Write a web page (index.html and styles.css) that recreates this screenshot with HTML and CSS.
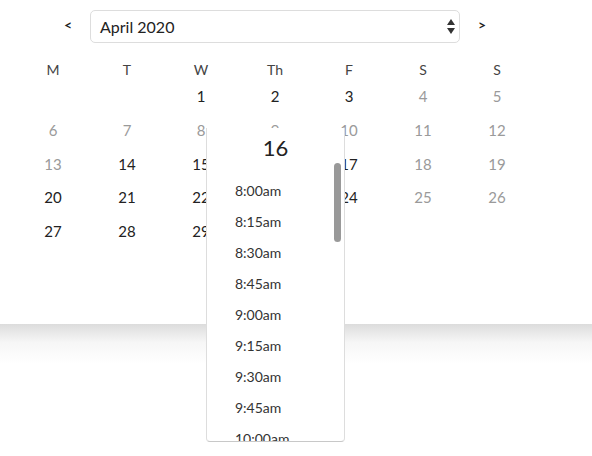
FILE: index.html
```html
<!DOCTYPE html>
<html lang="en">
<head>
    <meta charset="UTF-8">
    <meta name="viewport" content="width=device-width, initial-scale=1.0">
    <title>Booking Calendar</title>
    <link rel="stylesheet" href="styles.css">
</head>
<body>
  <div class="page">
    <div class="calendar">
        <!-- Month navigation -->
        <div class="nav">
            <button class="nav-btn">&lt;</button>
            <div class="month-select">
                <span>April 2020</span>
                <svg width="8" height="15" viewBox="0 0 8 15">
                    <path d="M4 0 L8 6 L0 6 Z" fill="#333"/>
                    <path d="M0 9 L8 9 L4 15 Z" fill="#333"/>
                </svg>
            </div>
            <button class="nav-btn">&gt;</button>
        </div>

        <!-- Days grid -->
        <div class="days">
            <div class="weekday">M</div>
            <div class="weekday">T</div>
            <div class="weekday">W</div>
            <div class="weekday">Th</div>
            <div class="weekday">F</div>
            <div class="weekday">S</div>
            <div class="weekday">S</div>

            <div class="day"></div>
            <div class="day"></div>
            <div class="day">1</div>
            <div class="day">2</div>
            <div class="day">3</div>
            <div class="day off">4</div>
            <div class="day off">5</div>

            <div class="day off">6</div>
            <div class="day off">7</div>
            <div class="day off">8</div>
            <div class="day off">9</div>
            <div class="day off">10</div>
            <div class="day off">11</div>
            <div class="day off">12</div>

            <div class="day off">13</div>
            <div class="day">14</div>
            <div class="day">15</div>
            <div class="day">16</div>
            <div class="day">17</div>
            <div class="day off">18</div>
            <div class="day off">19</div>

            <div class="day">20</div>
            <div class="day">21</div>
            <div class="day">22</div>
            <div class="day">23</div>
            <div class="day">24</div>
            <div class="day off">25</div>
            <div class="day off">26</div>

            <div class="day">27</div>
            <div class="day">28</div>
            <div class="day">29</div>
            <div class="day">30</div>
            <div class="day"></div>
            <div class="day"></div>
            <div class="day"></div>
        </div>
    </div>

    <!-- Time picker for selected day -->
    <div class="time-popup">
        <div class="time-title">16</div>
        <ul class="time-list">
            <li>8:00am</li>
            <li>8:15am</li>
            <li>8:30am</li>
            <li>8:45am</li>
            <li>9:00am</li>
            <li>9:15am</li>
            <li>9:30am</li>
            <li>9:45am</li>
            <li>10:00am</li>
            <li>10:15am</li>
            <li>10:30am</li>
            <li>10:45am</li>
        </ul>
        <div class="scroll-thumb"></div>
    </div>
  </div>
  <div class="page-shadow"></div>
</body>
</html>
```

FILE: styles.css
```css
html, body {
    min-height: 456px;
}
body {
    margin: 0;
    font-family: Lato, "Open Sans", sans-serif;
    color: #222;
    background: #fff;
}
.page {
    position: relative;
    z-index: 1;
    height: 324px;
    padding-top: 10px;
    box-sizing: border-box;
}
.page-shadow {
    height: 40px;
    background: linear-gradient(#dcdcdc, #f6f6f6 45%, #fff);
}
.calendar {
    width: 518px;
    margin-left: 16px;
}
.nav {
    display: flex;
    justify-content: center;
    align-items: center;
    gap: 10px;
    height: 33px;
}
.nav-btn {
    width: 24px;
    padding: 0 0 5px;
    border: none;
    background: none;
    font-family: inherit;
    font-size: 14px;
    font-weight: 700;
    color: #222;
}
.month-select {
    width: 370px;
    height: 33px;
    box-sizing: border-box;
    border: 1px solid #ddd;
    border-radius: 5px;
    padding: 0 4px 0 9px;
    display: flex;
    justify-content: space-between;
    align-items: center;
    font-size: 16px;
}
.days {
    display: grid;
    grid-template-columns: repeat(7, 74px);
    grid-template-rows: 21px;
    grid-auto-rows: 33.8px;
    margin-top: 16px;
}
.weekday {
    text-align: center;
    font-size: 14px;
    color: #444;
    line-height: 21px;
}
.day {
    text-align: center;
    font-size: 15px;
    line-height: 33.8px;
    color: #222;
}
.day.off {
    color: #9a9a9a;
}
.time-popup {
    position: absolute;
    left: 206px;
    top: 128px;
    width: 139px;
    height: 314px;
    box-sizing: border-box;
    background: #fff;
    border: 1px solid #ddd;
    border-top: none;
    border-bottom-color: #c8c8c8;
    border-radius: 0 0 4px 4px;
    display: flex;
    flex-direction: column;
}
.time-title {
    height: 35px;
    padding-top: 5px;
    box-sizing: border-box;
    line-height: 29px;
    text-align: center;
    font-size: 22px;
}
.time-list {
    list-style: none;
    margin: 0;
    padding: 12px 0 0 28px;
    flex: 1;
    overflow: hidden;
}
.time-list li {
    font-size: 14px;
    line-height: 31px;
    color: #333;
}
.scroll-thumb {
    position: absolute;
    left: 127px;
    top: 35px;
    width: 7px;
    height: 79px;
    border-radius: 4px;
    background: #999;
}
```
